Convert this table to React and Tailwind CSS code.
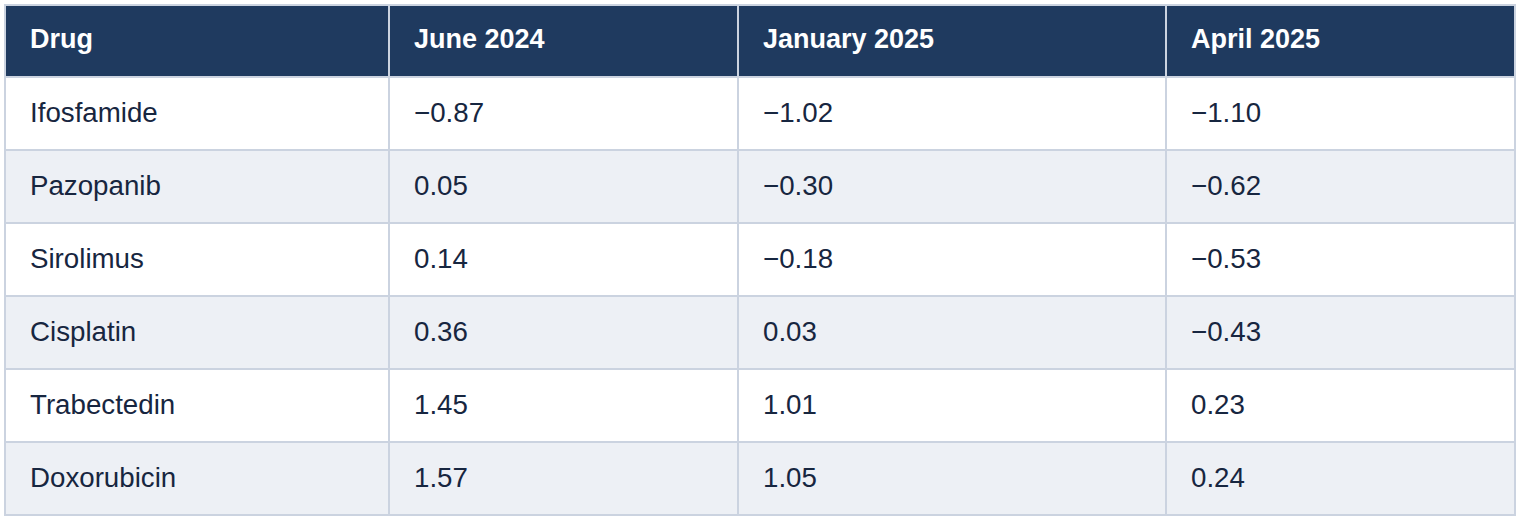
const headers = ['Drug', 'June 2024', 'January 2025', 'April 2025'];

const rows = [
  ['Ifosfamide', '\u22120.87', '\u22121.02', '\u22121.10'],
  ['Pazopanib', '0.05', '\u22120.30', '\u22120.62'],
  ['Sirolimus', '0.14', '\u22120.18', '\u22120.53'],
  ['Cisplatin', '0.36', '0.03', '\u22120.43'],
  ['Trabectedin', '1.45', '1.01', '0.23'],
  ['Doxorubicin', '1.57', '1.05', '0.24'],
];

const App = () => {
  return (
    <div className="bg-white p-[4px] w-[1520px] h-[522px]" style={{ fontFamily: '"Liberation Sans", Arial, sans-serif' }}>
      <table className="table-fixed border-collapse w-[1512px] border-2 border-[#cbd3e0]">
        <colgroup>
          <col className="w-[384px]" />
          <col className="w-[349px]" />
          <col className="w-[428px]" />
          <col className="w-[349px]" />
        </colgroup>
        <thead>
          <tr className="bg-[#1f3a5f]">
            {headers.map((h) => (
              <th
                key={h}
                className="h-[72px] border-2 border-[#cbd3e0] pl-[24px] pb-[4px] text-left align-middle text-[27px] font-bold text-white"
              >
                {h}
              </th>
            ))}
          </tr>
        </thead>
        <tbody>
          {rows.map((row, i) => (
            <tr key={row[0]} className={i % 2 === 1 ? 'bg-[#edf0f5]' : 'bg-white'}>
              {row.map((cell, j) => (
                <td
                  key={j}
                  className="h-[73px] border-2 border-[#cbd3e0] pl-[24px] pb-[2px] align-middle text-[27.7px] text-[#172640]"
                >
                  {cell}
                </td>
              ))}
            </tr>
          ))}
        </tbody>
      </table>
    </div>
  );
};

export default App;
